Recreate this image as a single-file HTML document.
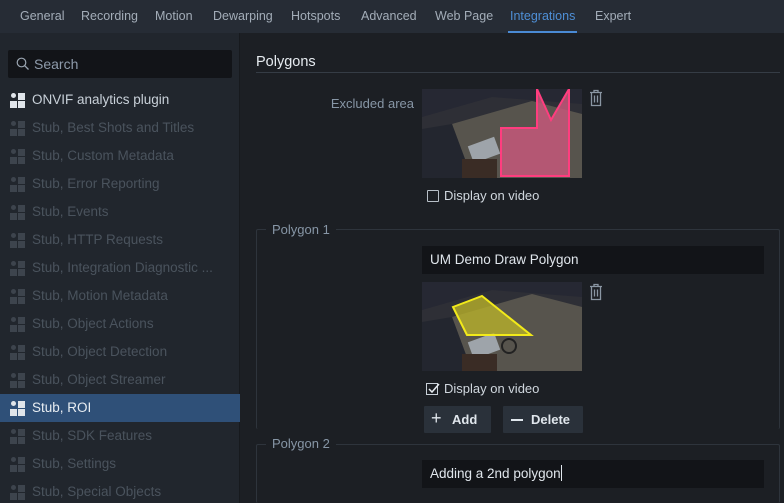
<!DOCTYPE html>
<html><head><meta charset="utf-8"><style>
*{margin:0;padding:0;box-sizing:border-box}
html,body{width:784px;height:503px;overflow:hidden}
body{background:#1c1f24;font-family:"Liberation Sans",sans-serif;font-size:13px;color:#c8d0d8;position:relative}
.abs{position:absolute}
.top{left:0;top:0;width:784px;height:33px;background:#262c35}
.tab{position:absolute;top:9px;color:#a3adb8;font-size:12.5px}
.side{left:0;top:33px;width:240px;height:470px;background:#21262d;border-right:1px solid #171a1e}
.search{left:8px;top:50px;width:224px;height:28px;background:#121418;border-radius:2px}
.item{position:absolute;left:0;width:240px;height:28px;line-height:28px;padding-left:32px;color:#4a535d;font-size:13.5px}
.item .ic{position:absolute;left:10px;top:7px;width:15px;height:15px}
.ic i{position:absolute;background:#3d444d}
.item.act{color:#e8edf2}
.item.act .ic i,.item.on .ic i{background:#e0e5ea}
.item.on{color:#c9d1d9}
.sel{background:#2f5078}
.lbl{color:#8796a6}
.gb{border:1px solid #2e343c;border-radius:2px}
.inp{background:#121418;height:28px;line-height:28px;padding-left:8px;color:#e0e6ec;font-size:13.5px}
.btn{background:#2a313a;height:27px;line-height:27px;color:#e0e6ec;font-weight:bold;font-size:13px;border-radius:1px}
.cb{width:12px;height:12px;border:1px solid #b8c0c8;border-radius:1px}
</style></head><body>
<div class="abs top">
<span class="tab" style="left:20px">General</span>
<span class="tab" style="left:81px">Recording</span>
<span class="tab" style="left:155px">Motion</span>
<span class="tab" style="left:213px">Dewarping</span>
<span class="tab" style="left:291px">Hotspots</span>
<span class="tab" style="left:361px">Advanced</span>
<span class="tab" style="left:435px">Web Page</span>
<span class="tab" style="left:510px;color:#4e8fd6">Integrations</span>
<span class="tab" style="left:595px">Expert</span>
<div class="abs" style="left:508px;top:31px;width:69px;height:2px;background:#4a8ad4"></div>
</div>
<div class="abs side"></div>
<div class="abs search">
<svg class="abs" style="left:8px;top:7px" width="14" height="14" viewBox="0 0 14 14"><circle cx="5.5" cy="5.5" r="4.3" fill="none" stroke="#9aa5b1" stroke-width="1.2"/><path d="M8.6 8.6L12.5 12.5" stroke="#9aa5b1" stroke-width="1.3"/></svg>
<span class="abs" style="left:26px;top:6px;color:#8e9bab;font-size:14px">Search</span>
</div>
<div id="list"></div>
<script>
var n=["ONVIF analytics plugin","Stub, Best Shots and Titles","Stub, Custom Metadata","Stub, Error Reporting","Stub, Events","Stub, HTTP Requests","Stub, Integration Diagnostic ...","Stub, Motion Metadata","Stub, Object Actions","Stub, Object Detection","Stub, Object Streamer","Stub, ROI","Stub, SDK Features","Stub, Settings","Stub, Special Objects"];
var h="";n.forEach(function(t,i){var c=i==0?"item on":(i==11?"item act sel":"item");
h+='<div class="'+c+'" style="top:'+(86+i*28)+'px"><span class="ic"><i style="left:1px;top:0;width:5px;height:5px;border-radius:50%"></i><i style="left:8px;top:0;width:7px;height:7px"></i><i style="left:0;top:8px;width:7px;height:7px"></i><i style="left:8px;top:8px;width:7px;height:7px"></i></span>'+t+'</div>';});
document.getElementById("list").innerHTML=h;
</script>
<div class="abs" style="left:256px;top:54px;font-size:14.5px;color:#e6ebf0">Polygons</div>
<div class="abs" style="left:256px;top:72px;width:524px;height:1px;background:#353c45"></div>
<div class="abs lbl" style="left:300px;top:96px;width:114px;text-align:right">Excluded area</div>
<svg class="abs" style="left:422px;top:89px" width="160" height="89" viewBox="0 0 160 89">
<rect width="160" height="89" fill="#2e2f36"/>
<polygon points="0,0 160,0 160,15 70,8 0,28" fill="#262833"/>
<polygon points="30,35 110,12 160,25 160,89 50,89" fill="#57544d"/>
<polygon points="0,40 30,35 50,89 0,89" fill="#23262f"/>
<rect x="48" y="52" width="28" height="18" fill="#9ea4aa" transform="rotate(-20 62 61)"/>
<rect x="40" y="70" width="35" height="19" fill="#3a2c25"/>
<polygon points="79,39 115,39 115,0 129,31 147,0 147,87 79,87" fill="#c4587a" fill-opacity=".85" stroke="#ff3d7f" stroke-width="2"/>
</svg>
<svg class="abs" style="left:589px;top:89px" width="14" height="18" viewBox="0 0 14 18"><path d="M1 3.5h12M5 3.5V1.5h4v2M2.5 3.5v13h9v-13M5.5 6.5v7M8.5 6.5v7" fill="none" stroke="#8a96a3" stroke-width="1.3"/></svg>
<div class="abs cb" style="left:427px;top:190px"></div>
<div class="abs" style="left:444px;top:188px;color:#d0d7de">Display on video</div>
<div class="abs gb" style="left:256px;top:229px;width:524px;height:200px;border-bottom:none"></div>
<div class="abs" style="left:266px;top:222px;padding:0 6px;background:#1c1f24;color:#8796a6">Polygon 1</div>
<div class="abs inp" style="left:422px;top:246px;width:342px">UM Demo Draw Polygon</div>
<svg class="abs" style="left:422px;top:282px" width="160" height="89" viewBox="0 0 160 89">
<rect width="160" height="89" fill="#2e2f36"/>
<polygon points="0,0 160,0 160,15 70,8 0,28" fill="#262833"/>
<polygon points="30,35 110,12 160,25 160,89 50,89" fill="#57544d"/>
<polygon points="0,40 30,35 50,89 0,89" fill="#23262f"/>
<rect x="48" y="55" width="28" height="18" fill="#9ea4aa" transform="rotate(-20 62 64)"/>
<rect x="40" y="72" width="35" height="17" fill="#3a2c25"/>
<circle cx="87" cy="64" r="7" fill="none" stroke="#222" stroke-width="2"/>
<polygon points="31,25 60,14 109,53 45,53" fill="#b8b02a" fill-opacity=".8" stroke="#f2ea1a" stroke-width="2"/>
</svg>
<svg class="abs" style="left:589px;top:283px" width="14" height="18" viewBox="0 0 14 18"><path d="M1 3.5h12M5 3.5V1.5h4v2M2.5 3.5v13h9v-13M5.5 6.5v7M8.5 6.5v7" fill="none" stroke="#8a96a3" stroke-width="1.3"/></svg>
<svg class="abs" style="left:426px;top:382px" width="14" height="14" viewBox="0 0 14 14"><rect x="0.5" y="1.5" width="11" height="11" fill="none" stroke="#c8d0d8"/><path d="M3 7l3 3 7-8" fill="none" stroke="#e8edf2" stroke-width="1.5"/></svg>
<div class="abs" style="left:444px;top:381px;color:#d0d7de">Display on video</div>
<div class="abs btn" style="left:424px;top:406px;width:67px"><span style="position:absolute;left:7px;top:-1px;font-size:18px;font-weight:normal">+</span><span style="position:absolute;left:28px">Add</span></div>
<div class="abs btn" style="left:503px;top:406px;width:80px"><span class="abs" style="left:8px;top:13px;width:12px;height:2px;background:#e0e6ec"></span><span style="position:absolute;left:28px">Delete</span></div>
<div class="abs gb" style="left:256px;top:444px;width:524px;height:59px;border-bottom:none"></div>
<div class="abs" style="left:266px;top:436px;padding:0 6px;background:#1c1f24;color:#8796a6">Polygon 2</div>
<div class="abs inp" style="left:422px;top:460px;width:342px">Adding a 2nd polygon<span style="display:inline-block;width:1px;height:16px;background:#e0e6ec;vertical-align:-3px"></span></div>
</body></html>
